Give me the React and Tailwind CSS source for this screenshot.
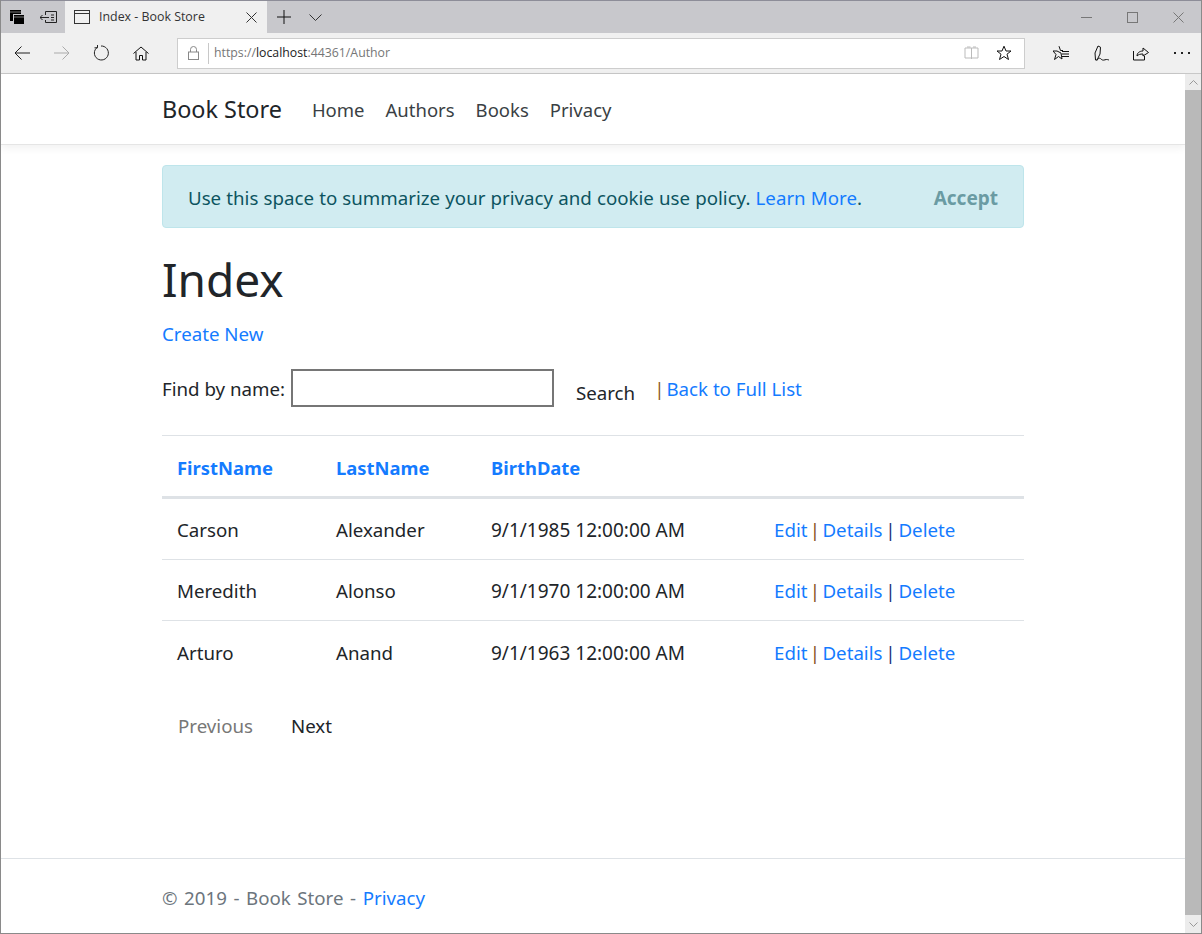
import React from "react";

const Ic = ({ w = 20, h = 20, vb = "0 0 20 20", c = "#111", sw = 1, children }) => (
  <svg width={w} height={h} viewBox={vb} fill="none" stroke={c} strokeWidth={sw} className="shrink-0 block">{children}</svg>
);

function Row({ a, b, d, h, pt }) {
  return (
    <tr className="border-b border-[#dee2e6] last:border-b-0">
      <td className={`pl-[15px] ${pt} ${h}`}>{a}</td>
      <td className={pt}>{b}</td>
      <td className={`${pt} text-[19px]`}>{d}</td>
      <td className={pt}>
        <a className="text-[#147bff]">Edit</a>
        <span className="inline-block w-[15px] text-center text-[#8a4f1c]">|</span>
        <a className="text-[#147bff]">Details</a>
        <span className="inline-block w-[16px] text-center text-[#17307a]">|</span>
        <a className="text-[#147bff]">Delete</a>
      </td>
    </tr>
  );
}

export default function App() {
  return (
    <div className="w-[1202px] h-[934px] flex flex-col overflow-hidden bg-white border border-[#8a8a8a] border-t-0 font-['Noto_Sans',sans-serif] text-[#212529]">
      {/* tab strip */}
      <div className="h-[33px] shrink-0 bg-[#c8c8cc] border-t border-[#8d8d98] flex items-stretch">
        <div className="w-[31px] flex items-center justify-center pl-[1px]">
          <Ic w={16} h={15} vb="0 0 16 15" c="#000">
            <rect x="1" y="0" width="11" height="11" fill="#000" stroke="none" />
            <rect x="1" y="1.500" width="11" height="1" fill="#777" stroke="none" />
            <rect x="4.500" y="4.500" width="11" height="10" fill="#000" stroke="#c8c8cc" />
            <rect x="5" y="6.500" width="10" height="1" fill="#777" stroke="none" />
          </Ic>
        </div>
        <div className="w-[33px] flex items-center justify-center">
          <Ic w={17} h={13} vb="0 0 17 13" c="#222">
            <path d="M5.500 4V.5h11v11h-11V9M0 6.500h9M2.500 4 0 6.500 2.500 9M11 4h3M11 6.500h3M11 9h3" />
          </Ic>
        </div>
        <div className="w-[202px] bg-[#f0f0f0] flex items-center pl-[9px] pr-[10px]">
          <Ic w={16} h={14} vb="0 0 16 14" c="#333">
            <rect x=".5" y=".5" width="15" height="13" />
            <path d="M.5 3.500h15" />
          </Ic>
          <span className="ml-[9px] text-[12.4px] text-[#333] flex-1 font-['Open_Sans',sans-serif]">Index - Book Store</span>
          <Ic w={11} h={11} vb="0 0 11 11" c="#333">
            <path d="M.5.5l10 10M10.500.5l-10 10" />
          </Ic>
        </div>
        <div className="w-[34px] flex items-center justify-center">
          <Ic w={14} h={14} vb="0 0 14 14" c="#111">
            <path d="M7 0v14M0 7h14" />
          </Ic>
        </div>
        <div className="w-[28px] flex items-center justify-center">
          <Ic w={13} h={7} vb="0 0 13 7" c="#333">
            <path d="M.5.5l6 6 6-6" />
          </Ic>
        </div>
        <div className="flex-1" />
        <div className="w-[138px] flex items-center text-[#777]">
          <div className="w-[46px] flex justify-center">
            <Ic w={11} h={1} vb="0 0 11 1" c="#777"><path d="M0 .5h11" /></Ic>
          </div>
          <div className="w-[46px] flex justify-center">
            <Ic w={11} h={11} vb="0 0 11 11" c="#777"><rect x=".5" y=".5" width="10" height="10" /></Ic>
          </div>
          <div className="w-[46px] flex justify-center">
            <Ic w={11} h={11} vb="0 0 11 11" c="#777"><path d="M.5.500l10 10M10.500.500l-10 10" /></Ic>
          </div>
        </div>
      </div>

      {/* toolbar */}
      <div className="h-[41px] shrink-0 bg-[#f0f0f0] border-b border-[#c8c8c8] flex items-center">
        <div className="w-[41px] flex justify-center">
          <Ic w={16} h={14} vb="0 0 16 14" c="#222">
            <path d="M16 7H1M7.500.5 1 7l6.500 6.500" />
          </Ic>
        </div>
        <div className="w-[39px] flex justify-center">
          <Ic w={16} h={14} vb="0 0 16 14" c="#aaa">
            <path d="M0 7h15M8.500.5 15 7l-6.500 6.500" />
          </Ic>
        </div>
        <div className="w-[40px] flex justify-center">
          <Ic w={16} h={16} vb="0 0 16 16" c="#222">
            <path d="M4.300 2.300A7 7 0 1 0 8 1" />
            <path d="M4.500 0v2.800h-3" />
          </Ic>
        </div>
        <div className="w-[39px] flex justify-center">
          <Ic w={16} h={15} vb="0 0 16 15" c="#111">
            <path d="M.5 7.500 8 1l7.500 6.500M3 6v8h3.500V9.500h3V14H13V6" />
          </Ic>
        </div>
        <div className="w-[17px]" />
        <div className="w-[848px] h-[31px] bg-white border border-[#cdcdcd] flex items-center">
          <div className="w-[30px] flex justify-center">
            <Ic w={11} h={14} vb="0 0 11 14" c="#888">
              <rect x=".5" y="6" width="10" height="7.500" />
              <path d="M2.500 6V3.500a3 3 0 0 1 6 0V6" />
            </Ic>
          </div>
          <div className="w-px h-[21px] bg-[#c8c8c8]" />
          <span className="ml-[5px] text-[12.3px] text-[#767676] font-['Open_Sans',sans-serif]">
            https://<span className="text-[#222]">localhost</span>:44361/Author
          </span>
          <div className="flex-1" />
          <Ic w={15} h={14} vb="0 0 15 14" c="#bbb">
            <path d="M7.500 2v11M7.500 2H1v10h6.500M7.500 2H14v10H7.500M3 1h3.500M9 1h3" />
          </Ic>
          <div className="w-[17px]" />
          <Ic w={16} h={16} vb="0 0 16 16" c="#111">
            <path d="M8 1.200 10 6h5l-4 3.200 1.500 5.300L8 11.500l-4.500 3L5 9.200 1 6h5z" />
          </Ic>
          <div className="w-[12px]" />
        </div>
        <div className="flex-1 flex items-center pl-[28px]">
          <Ic w={17} h={16} vb="0 0 17 16" c="#111">
            <path d="M6 1.200 7.500 5.500H10M8 8l1 6-3.500-2.500L1.500 14.500 3 9.500 0 6h4z" />
            <path d="M9 6.500h7M9 9h7M9 11.500h7" />
          </Ic>
          <div className="w-[24px]" />
          <Ic w={16} h={17} vb="0 0 16 17" c="#111">
            <path d="M1.500 15 1 8l3-7 2.500 1.200-.5 6.800L3 15zM3 15.500c1.500-3 3-2.500 4-1.500s2 1.500 4 .8 3 0 4 .2" />
          </Ic>
          <div className="w-[23px]" />
          <Ic w={16} h={15} vb="0 0 16 15" c="#111">
            <path d="M.5 5v9h11V10M4 10c0-3 2.500-5 6-5V2l5.500 4.500L10 10V8c-3 0-4.500.5-6 2z" />
          </Ic>
          <div className="w-[25px]" />
          <div className="flex gap-[5px]">
            <span className="w-[2px] h-[2px] bg-[#222]" />
            <span className="w-[2px] h-[2px] bg-[#222]" />
            <span className="w-[2px] h-[2px] bg-[#222]" />
          </div>
        </div>
      </div>

      {/* viewport */}
      <div className="flex-1 flex min-h-0">
        <div className="flex-1 min-w-0 flex flex-col text-[18.7px]">
          <nav className="h-[71px] shrink-0 border-b border-[#e5e5e5] shadow-[0_3px_8px_rgba(0,0,0,0.06)] pl-[161px] pt-[2px] flex items-center">
            <span className="text-[23.4px] text-[#212529] mr-[30px]">Book Store</span>
            <div className="flex gap-[21px] text-[18.5px] text-[#3a3f44]">
              <span>Home</span><span>Authors</span><span>Books</span><span>Privacy</span>
            </div>
          </nav>

          <main className="flex-1 mx-[161px] w-[862px] flex flex-col">
            <div className="mt-[20px] h-[63px] bg-[#d1ecf1] border border-[#bee5eb] rounded-[4px] text-[#0c5460] flex items-center pl-[25px] pr-[25px] pt-[3px] justify-between [word-spacing:0.3px]">
              <span>Use this space to summarize your privacy and cookie use policy. <a className="text-[#147bff]">Learn More</a>.</span>
              <span className="font-bold text-[19px] text-[#6a9ba3]">Accept</span>
            </div>
            <h1 className="mt-[15px] text-[46px] leading-[72px]">Index</h1>
            <a className="text-[#147bff] mt-[5px] leading-[28px]">Create New</a>

            <div className="flex items-center mt-[21px] h-[38px]">
              <span className="pt-[2px]">Find by name:</span>
              <input className="ml-[6px] w-[263px] h-[38px] border-2 border-[#767676] bg-white" />
              <span className="ml-[22px] relative top-[5px]">Search</span>
              <span className="ml-[19px] pt-[2px] text-[#8a5a1c]">|</span>
              <a className="ml-[2px] pt-[2px] text-[#147bff]">Back to Full List</a>
            </div>

            <table className="mt-[28px] w-full border-collapse">
              <thead>
                <tr className="border-t border-[#dee2e6] border-b-[3px] border-b-[#dee2e6]">
                  <th className="pl-[15px] pt-[3px] h-[62px] w-[174px] text-left font-bold text-[18.4px] text-[#147bff]">FirstName</th>
                  <th className="w-[155px] pt-[3px] text-left font-bold text-[18.4px] text-[#147bff]">LastName</th>
                  <th className="w-[283px] pt-[3px] text-left font-bold text-[18.4px] text-[#147bff]">BirthDate</th>
                  <th />
                </tr>
              </thead>
              <tbody>
                <Row a="Carson" b="Alexander" d="9/1/1985 12:00:00 AM" h="h-[62px]" pt="pt-[2px]" />
                <Row a="Meredith" b="Alonso" d="9/1/1970 12:00:00 AM" h="h-[61px]" pt="pt-[3px]" />
                <Row a="Arturo" b="Anand" d="9/1/1963 12:00:00 AM" h="h-[62px]" pt="pt-[3px]" />
              </tbody>
            </table>

            <div className="mt-[29px] flex pl-[16px]">
              <span className="text-[#777]">Previous</span>
              <span className="ml-[38px]">Next</span>
            </div>
          </main>

          <footer className="h-[75px] shrink-0 border-t border-[#dee2e6] pl-[161px] pt-[5px] flex items-center text-[#6c757d] [word-spacing:1.7px]">
            <span>© 2019 - Book Store - <a className="text-[#147bff]">Privacy</a></span>
          </footer>
        </div>

        {/* scrollbar */}
        <div className="w-[16px] shrink-0 bg-[#b9b9b9] flex flex-col">
          <div className="h-[16px] bg-[#ececec] flex items-center justify-center">
            <Ic w={9} h={5} vb="0 0 9 5" c="#999"><path d="M.5 4.500l4-4 4 4" /></Ic>
          </div>
          <div className="flex-1" />
          <div className="h-[18px] bg-[#ececec] flex items-center justify-center">
            <Ic w={9} h={5} vb="0 0 9 5" c="#999"><path d="M.5.500l4 4 4-4" /></Ic>
          </div>
        </div>
      </div>
    </div>
  );
}
